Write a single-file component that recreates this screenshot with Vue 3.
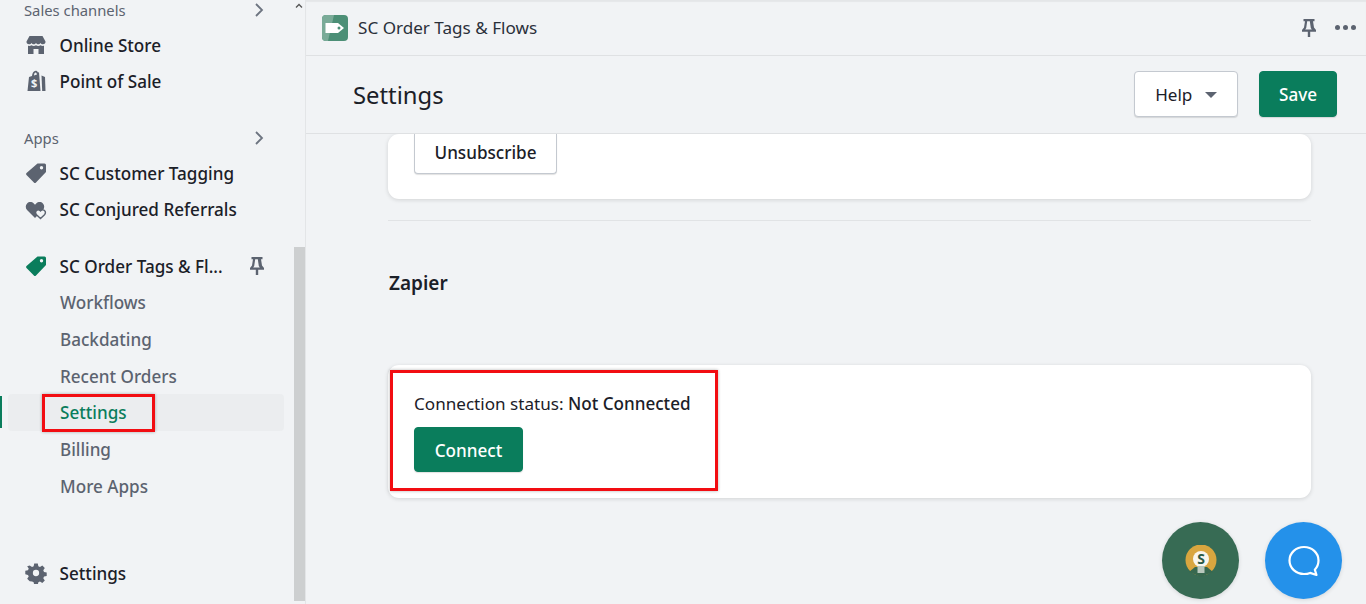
<template>
  <div class="admin">
    <aside class="sidebar">
      <nav class="nav">
        <div class="section-head">
          <span>Sales channels</span>
          <svg class="chev" viewBox="0 0 10 16"><path d="M2 2l6 6-6 6" /></svg>
        </div>
        <a class="item">
          <svg class="icon" viewBox="0 0 20 20"><path d="M3.500 1h13L19.500 6.500a2.700 2.700 0 0 1-2.600 2.800c-1 0-2-.5-2.400-1.400-.5.9-1.400 1.400-2.300 1.400S10.500 8.800 10 7.900c-.5.900-1.300 1.400-2.200 1.400S6 8.800 5.500 7.900C5.100 8.800 4.100 9.300 3.100 9.300A2.700 2.700 0 0 1 .5 6.500L3.500 1z" /><path d="M2 10.800c.4.100.7.100 1.100.1.900 0 1.700-.2 2.400-.7.700.5 1.400.7 2.300.7.800 0 1.500-.2 2.200-.7.700.5 1.400.7 2.200.7.900 0 1.600-.2 2.300-.7.700.5 1.500.7 2.400.7.400 0 .7 0 1.100-.1V19h-5.500v-5h-5v5H2v-8.200z" /></svg>
          <span>Online Store</span>
        </a>
        <a class="item">
          <svg class="icon bag" viewBox="0 0 20 22"><path d="M1.500 21 3 7l3-.9C6.200 3 7.700.8 9.700.8c1 0 1.800.6 2.300 1.700l1-.3L14.500 21h-13zM8 5.500l3-.9C10.700 3.300 10.200 2.500 9.600 2.500 8.800 2.500 8.100 3.800 8 5.500z" fill-rule="evenodd" /><path d="M15.500 5.500 19 7l.5 14h-3.300z" /><text x="8.200" y="16.800" class="bag-s">$</text></svg>
          <span>Point of Sale</span>
        </a>
        <div class="section-head apps-head">
          <span>Apps</span>
          <svg class="chev" viewBox="0 0 10 16"><path d="M2 2l6 6-6 6" /></svg>
        </div>
        <a class="item">
          <svg class="icon tag" viewBox="0 0 22 22"><path fill-rule="evenodd" d="M12.500 1.500h7A1.500 1.500 0 0 1 21 3v7L11 20.500a1.500 1.500 0 0 1-2.100 0L1.500 13a1.500 1.500 0 0 1 0-2.100zM16.500 4a1.700 1.700 0 1 0 0 3.400 1.700 1.700 0 0 0 0-3.400z" /></svg>
          <span>SC Customer Tagging</span>
        </a>
        <a class="item">
          <svg class="icon tag" viewBox="0 0 22 22"><path d="M10 20 2.300 12.300C.3 10.300.3 7.200 2.100 5.400c1.800-1.800 4.700-1.800 6.700.1L10 6.700l1.200-1.200c2-1.900 4.900-1.900 6.700-.1 1.800 1.800 1.800 4.900-.2 6.900L10 20z" /><path d="M15.500 20.500l-4-3.800c-1.200-1.200-1.200-3-.2-4 1-1.100 2.800-1.100 4 .1l.2.200.2-.2c1.200-1.200 3-1.200 4-.1 1 1 1 2.800-.2 4l-4 3.800z" fill="#f1f3f5" stroke="#5c6370" stroke-width="1.400" /></svg>
          <span>SC Conjured Referrals</span>
        </a>
        <a class="item app-open">
          <svg class="icon tag green" viewBox="0 0 22 22"><path fill-rule="evenodd" d="M12.500 1.500h7A1.500 1.500 0 0 1 21 3v7L11 20.500a1.500 1.500 0 0 1-2.100 0L1.500 13a1.500 1.500 0 0 1 0-2.100zM16.500 4a1.700 1.700 0 1 0 0 3.400 1.700 1.700 0 0 0 0-3.400z" /></svg>
          <span class="grow">SC Order Tags &amp; Fl...</span>
          <svg class="pin" viewBox="0 0 14 20"><path d="M1.500 1h11v2.200H11l1 6.300 2 2.500v1.800H8.200V19H5.800v-5.200H0V12l2-2.500 1-6.300H1.500V1zm3.700 2.200-1 6.900-1 1.500h6.600l-1-1.500-1-6.900H5.200z" fill-rule="evenodd" /></svg>
        </a>
        <a v-for="link in subLinks" :key="link" class="sub" :class="{ active: link === 'Settings' }">
          {{ link }}
          <i v-if="link === 'Settings'" class="marker"></i>
          <i v-if="link === 'Settings'" class="red-box settings-box"></i>
        </a>
      </nav>
      <a class="item bottom">
        <svg class="icon gear" viewBox="0 0 22 22"><path fill-rule="evenodd" d="M9 .5h4l.6 3 1.800.8 2.600-1.700 2.800 2.800-1.700 2.600.8 1.800 3 .6v4l-3 .6-.8 1.800 1.700 2.600-2.800 2.800-2.600-1.700-1.800.8-.6 3H9l-.6-3-1.800-.8L4 20.300l-2.800-2.800 1.700-2.600-.8-1.800-3-.6v-4l3-.6.8-1.800-1.700-2.600L4 2.600l2.600 1.700 1.800-.8L9 .5zM11 7.500a3.500 3.500 0 1 0 0 7 3.500 3.500 0 0 0 0-7z" transform="translate(1.100 1.100) scale(.9)" /></svg>
        <span>Settings</span>
      </a>
      <div class="scrollbar">
        <svg class="scroll-up" viewBox="0 0 8 6"><path d="M1 4.500l3-3 3 3" /></svg>
        <div class="thumb"></div>
      </div>
    </aside>

    <main class="main">
      <header class="topbar">
        <svg class="logo" viewBox="0 0 26 26">
          <rect width="26" height="26" rx="4" fill="#4c8f76" />
          <path d="M0 4a4 4 0 0 1 4-4h8L6 26H4a4 4 0 0 1-4-4z" fill="#7aab98" />
          <path d="M3.500 8h12.500l6 5-6 5H3.500z" fill="#fff" />
          <circle cx="17" cy="13" r="1.500" fill="#4c8f76" />
        </svg>
        <span class="app-name">SC Order Tags &amp; Flows</span>
        <svg class="pin top-pin" viewBox="0 0 14 20"><path d="M1.500 1h11v2.200H11l1 6.300 2 2.500v1.800H8.200V19H5.800v-5.200H0V12l2-2.500 1-6.300H1.500V1zm3.700 2.200-1 6.900-1 1.500h6.600l-1-1.500-1-6.900H5.200z" fill-rule="evenodd" /></svg>
        <span class="dots"><i></i><i></i><i></i></span>
      </header>
      <div class="titlebar">
        <h1>Settings</h1>
        <button class="btn help">Help <span class="caret"></span></button>
        <button class="btn primary save">Save</button>
      </div>
      <div class="content">
        <section class="card top-card">
          <button class="btn unsub">Unsubscribe</button>
        </section>
        <hr class="divider" />
        <h2>Zapier</h2>
        <section class="card zapier">
          <p>Connection status: <strong>Not Connected</strong></p>
          <button class="btn primary connect">Connect</button>
          <i class="red-box connect-box"></i>
        </section>
      </div>
      <div class="fabs">
        <div class="fab green-fab">
          <svg viewBox="0 0 32 32" width="32" height="32">
            <circle cx="16" cy="15" r="15.500" fill="#d9a63f" />
            <path d="M4 27 10 22h12l6 5-12 5z" fill="#37684f" />
            <circle cx="16" cy="14" r="8" fill="#f8f6ee" />
            <rect x="12.500" y="21" width="7" height="7" fill="#b9c8bd" />
            <text x="16" y="19" class="fab-s">S</text>
          </svg>
        </div>
        <div class="fab blue-fab">
          <svg viewBox="0 0 32 32" width="32" height="32"><path d="M16 2c8 0 14.500 5.800 14.500 13.500 0 3.600-1.400 6.800-3.700 9.200l1.700 5.300-6.400-2.100c-1.900.8-3.900 1.100-6.100 1.100C8 29 1.500 23.200 1.500 15.500S8 2 16 2z" fill="none" stroke="#fff" stroke-width="2.200" stroke-linejoin="round" /></svg>
        </div>
      </div>
    </main>
  </div>
</template>

<script setup>
const subLinks = ['Workflows', 'Backdating', 'Recent Orders', 'Settings', 'Billing', 'More Apps']
</script>

<style>
html, body {
  margin: 0;
  height: 100%;
  overflow: hidden;
  background: #f1f3f5;
}
</style>

<style scoped>
.admin {
  display: flex;
  height: 604px;
  overflow: hidden;
  font-family: "Noto Sans", "Open Sans", sans-serif;
  font-size: 17.100px;
  color: #1b2028;
  background: #f1f3f5;
}

.sidebar {
  position: relative;
  width: 306px;
  flex: none;
  display: flex;
  flex-direction: column;
  overflow: hidden;
  border-right: 1px solid #e3e5e7;
  box-sizing: border-box;
}

.nav {
  flex: 1;
  margin-top: -8px;
}

.section-head {
  display: flex;
  align-items: center;
  justify-content: space-between;
  height: 36px;
  margin-bottom: -1px;
  padding: 0 41px 0 24px;
  font-size: 14.800px;
  color: #5c6370;
}

.apps-head {
  margin-top: 21px;
  margin-bottom: -1px;
}

.chev {
  width: 10px;
  height: 16px;
  fill: none;
  stroke: #6d7480;
  stroke-width: 1.800;
}

.item {
  display: flex;
  align-items: center;
  height: 36px;
  padding-left: 26px;
  padding-right: 41px;
  gap: 13.600px;
  font-weight: 500;
}

.icon {
  width: 20px;
  height: 20px;
  flex: none;
  fill: #5c6370;
}

.icon.bag {
  height: 22px;
}

.icon.tag,
.icon.gear {
  width: 22px;
  height: 22px;
  margin-left: -1px;
  margin-right: -1px;
}

.icon.green {
  fill: #0a7d5c;
}

.bag-s {
  font-size: 11px;
  font-weight: 700;
  fill: #f1f3f5;
  text-anchor: middle;
}

.app-open {
  margin-top: 21px;
}

.grow {
  flex: 1;
  white-space: nowrap;
}

.pin {
  width: 14px;
  height: 20px;
  flex: none;
  fill: #5c6370;
}

.sub {
  position: relative;
  display: block;
  height: 36.800px;
  line-height: 38.300px;
  padding-left: 60px;
  font-weight: 500;
  color: #5c6370;
}

.sub.active {
  margin: 0 21px 0 8px;
  padding-left: 52px;
  background: #ebedef;
  border-radius: 4px;
  color: #0a7d5c;
}

.marker {
  position: absolute;
  left: -8px;
  top: 2px;
  width: 2px;
  height: 32px;
  background: #0a7d5c;
}

.red-box {
  position: absolute;
  box-sizing: border-box;
  border: 3px solid #f20d12;
  box-shadow: 0 0 3px rgba(0, 0, 0, 0.3);
  pointer-events: none;
}

.settings-box {
  left: 34px;
  top: 0;
  width: 113px;
  height: 38px;
}

.bottom {
  margin-bottom: 13px;
}

.scrollbar {
  position: absolute;
  top: 0;
  right: 0;
  bottom: 0;
  width: 11px;
}

.scroll-up {
  position: absolute;
  top: 3px;
  left: 1px;
  width: 8px;
  height: 6px;
  fill: none;
  stroke: #555;
  stroke-width: 1.300;
}

.thumb {
  position: absolute;
  top: 247px;
  bottom: 3px;
  left: 0;
  right: 0;
  background: #cdcfd0;
}

.main {
  position: relative;
  flex: 1;
  min-width: 0;
  display: flex;
  flex-direction: column;
}

.topbar {
  display: flex;
  align-items: center;
  height: 55px;
  padding: 0 10px 0 16px;
  flex: none;
  border-bottom: 1px solid #dfe1e3;
  box-shadow: inset 0 2px 1px rgba(0, 0, 0, 0.05);
  gap: 10px;
}

.logo {
  width: 26px;
  height: 26px;
  flex: none;
}

.app-name {
  flex: 1;
  color: #2a303a;
}

.top-pin {
  margin-right: 9px;
}

.dots {
  display: flex;
  gap: 3px;
}

.dots i {
  width: 5px;
  height: 5px;
  border-radius: 50%;
  background: #5c6370;
}

.titlebar {
  display: flex;
  align-items: center;
  height: 78px;
  padding: 0 29px 1px 47px;
  box-sizing: border-box;
  flex: none;
  border-bottom: 1px solid #dfe1e3;
  position: relative;
  z-index: 1;
  background: #f1f3f5;
}

h1 {
  flex: 1;
  margin: 2px 0 0;
  font-size: 23.800px;
  font-weight: 400;
  color: #1b2028;
}

.btn {
  font: inherit;
  font-weight: 500;
  height: 46px;
  border-radius: 4px;
  box-sizing: border-box;
  border: 1px solid #c4c9d0;
  background: #fff;
  color: #1b2028;
  box-shadow: 0 1px 1px rgba(0, 0, 0, 0.12);
  cursor: pointer;
}

.btn.primary {
  background: #0a7d5c;
  border-color: #0a7d5c;
  color: #fff;
}

.help {
  width: 104px;
  margin-right: 21px;
  font-weight: 400;
}

.caret {
  display: inline-block;
  margin-left: 8px;
  vertical-align: 3px;
  border: 6px solid transparent;
  border-top: 6px solid #5c6370;
  border-bottom: 0;
}

.save {
  width: 78px;
}

.content {
  flex: 1;
  padding: 0 55px 0 82px;
  overflow: hidden;
}

.card {
  position: relative;
  background: #fff;
  border-radius: 11px;
  box-shadow: 0 1px 4px rgba(23, 24, 24, 0.14);
}

.top-card {
  height: 65px;
  padding-left: 26px;
}

.unsub {
  display: block;
  width: 143px;
  height: 40px;
  padding-bottom: 4px;
  border-top: 0;
  border-radius: 0 0 4px 4px;
}

.divider {
  margin: 21px 0 0;
  border: 0;
  border-top: 1px solid #e1e3e5;
}

h2 {
  margin: 49px 0 69px 1px;
  font-size: 19px;
  line-height: 26px;
  font-weight: 600;
}

.zapier {
  height: 133px;
  box-sizing: border-box;
  padding: 27px 26px 0;
}

.zapier p {
  margin: 0 0 11px;
  line-height: 24px;
}

.zapier strong {
  font-weight: 500;
}

.connect {
  display: block;
  width: 109px;
  height: 45px;
  padding-top: 2px;
}

.connect-box {
  left: 2px;
  top: 5px;
  width: 328px;
  height: 121px;
}

.fabs {
  position: absolute;
  right: 24px;
  bottom: 5px;
  display: flex;
  gap: 26px;
}

.fab {
  width: 77px;
  height: 77px;
  border-radius: 50%;
  display: flex;
  align-items: center;
  justify-content: center;
  box-shadow: 0 1px 4px rgba(0, 0, 0, 0.12);
}

.green-fab {
  background: #376b54;
}

.blue-fab {
  background: #2491ea;
}

.fab-s {
  font-size: 14px;
  font-weight: 700;
  fill: #2c5a45;
  text-anchor: middle;
}
</style>
